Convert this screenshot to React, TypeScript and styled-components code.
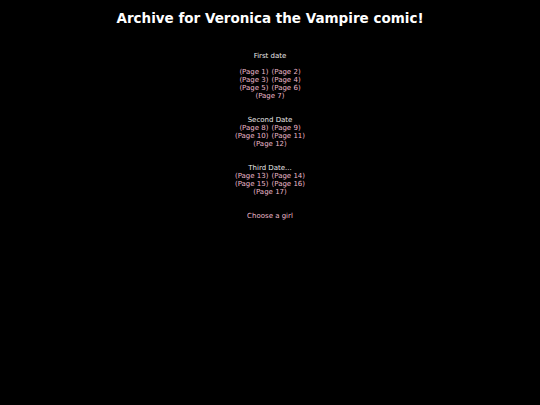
import React from "react";
import styled, { createGlobalStyle } from "styled-components";

const GlobalStyle = createGlobalStyle`
  html, body {
    margin: 0;
    padding: 0;
    background: #000;
  }
  body {
    font-family: "DejaVu Sans", Verdana, sans-serif;
  }
`;

const Page = styled.main`
  min-height: 405px;
  background: #000;
  color: #e0e0e0;
  text-align: center;
  padding-top: 8px;
`;

const Title = styled.h1`
  margin: 0 0 24px;
  font-size: 13.5px;
  line-height: 20px;
  font-weight: bold;
  color: #fff;
`;

const Chapter = styled.section`
  font-size: 7px;
  line-height: 8px;
  margin-bottom: 16px;
`;

const Heading = styled.div<{ $gap?: boolean }>`
  color: #e8e8e8;
  margin-bottom: ${({ $gap }) => ($gap ? "8px" : "0")};
`;

const Row = styled.div`
  display: flex;
  justify-content: center;
  gap: 3px;
`;

const Link = styled.a`
  color: #ebb8ca;
  text-decoration: none;
`;

const Footer = styled.div`
  font-size: 7px;
  line-height: 8px;
  margin-top: 4px;
`;

const chapters = [
  { title: "First date", gap: true, pages: [1, 2, 3, 4, 5, 6, 7] },
  { title: "Second Date", gap: false, pages: [8, 9, 10, 11, 12] },
  { title: "Third Date...", gap: false, pages: [13, 14, 15, 16, 17] },
];

const pairs = (list: number[]) => {
  const out: number[][] = [];
  for (let i = 0; i < list.length; i += 2) out.push(list.slice(i, i + 2));
  return out;
};

const App: React.FC = () => (
  <>
    <GlobalStyle />
    <Page>
      <Title>Archive for Veronica the Vampire comic!</Title>
      {chapters.map((c) => (
        <Chapter key={c.title}>
          <Heading $gap={c.gap}>{c.title}</Heading>
          {pairs(c.pages).map((row) => (
            <Row key={row[0]}>
              {row.map((n) => (
                <Link key={n} href={`#page${n}`}>(Page {n})</Link>
              ))}
            </Row>
          ))}
        </Chapter>
      ))}
      <Footer>
        <Link href="#girls">Choose a girl</Link>
      </Footer>
    </Page>
  </>
);

export default App;
